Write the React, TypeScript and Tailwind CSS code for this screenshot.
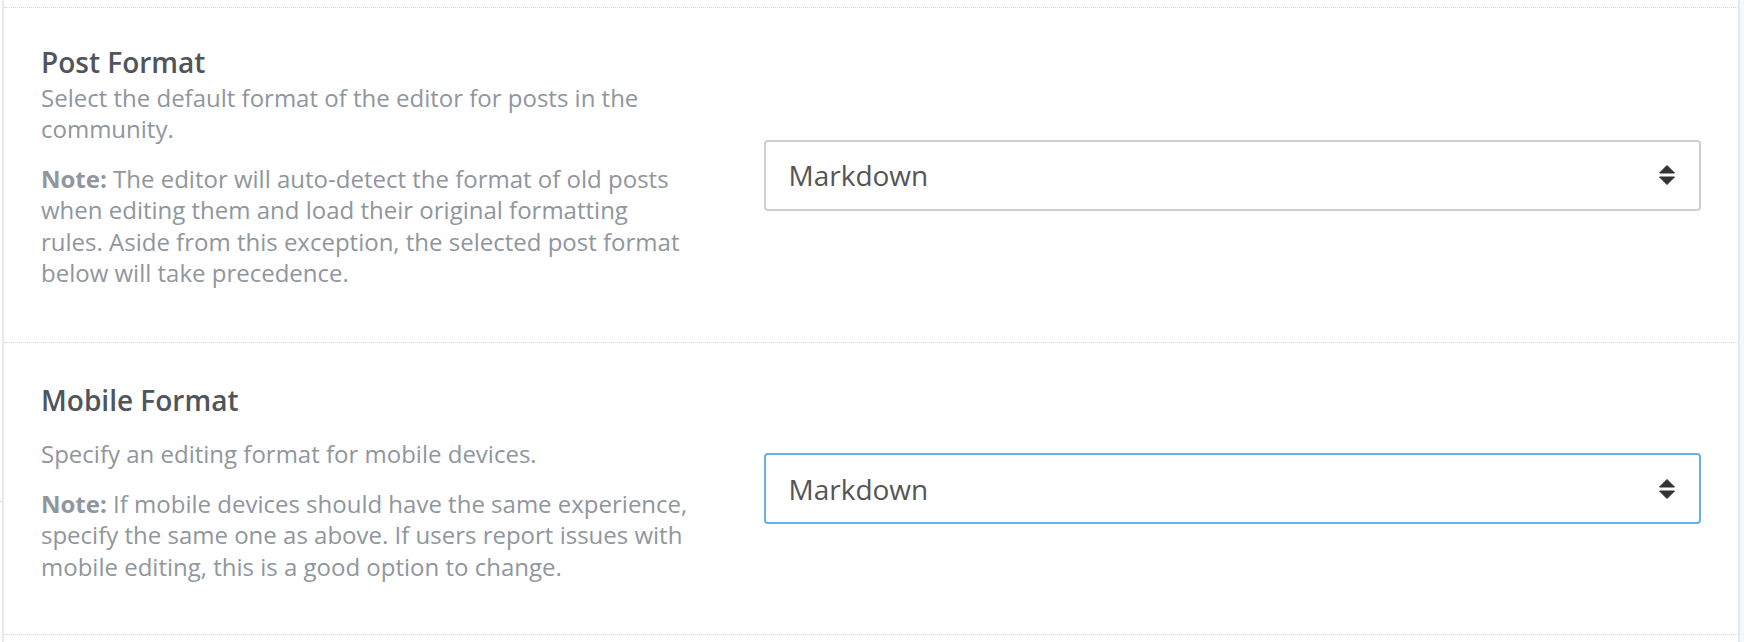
import React from 'react';

const font = { fontFamily: '"Open Sans", "Noto Sans", sans-serif' };

const SortArrows: React.FC = () => (
  <svg width="16" height="20" viewBox="0 0 16 20" className="shrink-0">
    <path d="M8 0.5 L15.5 8 L0.5 8 Z" fill="#333" stroke="#333" strokeLinejoin="round" strokeWidth="1" />
    <path d="M0.5 12 L15.5 12 L8 19.5 Z" fill="#333" stroke="#333" strokeLinejoin="round" strokeWidth="1" />
  </svg>
);

interface FormatSelectProps {
  value: string;
  focused?: boolean;
}

const FormatSelect: React.FC<FormatSelectProps> = ({ value, focused = false }) => (
  <div
    className={
      'flex h-[71px] w-full items-center justify-between rounded-[4px] border-2 bg-white pl-[23px] pr-[24px] ' +
      (focused ? 'border-[#66afe9]' : 'border-[#cfcfcf]')
    }
  >
    <span className="text-[28px] leading-none text-[#555]">{value}</span>
    <SortArrows />
  </div>
);

const App: React.FC = () => {
  return (
    <div className="flex h-[642px] w-[1744px] bg-white" style={font}>
      <div className="w-[2px] shrink-0">
        <div className="mt-[501px] h-px w-[2px] bg-[#d3d7db]" />
      </div>
      <div className="w-[1738px] shrink-0 border-x-2 border-[#e6eaee] pt-[7px]">
        {/* Post Format */}
        <div className="grid grid-cols-12 border-t border-dotted border-[#d6d6d6]">
          <div className="col-span-5 px-[37px] pt-[39px] pb-[36px]">
            <h3 className="text-[28px] font-semibold leading-[30px] text-[#50555b]">Post Format</h3>
            <p className="mt-[5px] text-[24px] leading-[31.4px] text-[#8f969d]">
              Select the default format of the editor for posts in the community.
            </p>
            <p className="mt-[18px] mb-[18px] text-[24px] leading-[31.4px] text-[#8f969d]">
              <strong className="font-bold">Note:</strong> The editor will auto-detect the format of old posts when
              editing them and load their original formatting rules. Aside from this exception, the selected post
              format below will take precedence.
            </p>
          </div>
          <div className="col-span-7 flex items-center px-[37px]">
            <FormatSelect value="Markdown" />
          </div>
        </div>

        {/* Mobile Format */}
        <div className="grid grid-cols-12 border-y border-dotted border-[#d6d6d6]">
          <div className="col-span-5 px-[37px] pt-[42px] pb-[34px]">
            <h3 className="text-[28px] font-semibold leading-[30px] text-[#50555b]">Mobile Format</h3>
            <p className="mt-[23px] text-[24px] leading-[31.4px] text-[#8f969d]">
              Specify an editing format for mobile devices.
            </p>
            <p className="mt-[18px] mb-[18px] text-[24px] leading-[31.4px] text-[#8f969d]">
              <strong className="font-bold">Note:</strong> If mobile devices should have the same experience, specify
              the same one as above. If users report issues with mobile editing, this is a good option to change.
            </p>
          </div>
          <div className="col-span-7 flex items-center px-[37px]">
            <FormatSelect value="Markdown" focused />
          </div>
        </div>
      </div>
      <div className="flex-1 bg-[#f5f7f9]" />
    </div>
  );
};

export default App;
